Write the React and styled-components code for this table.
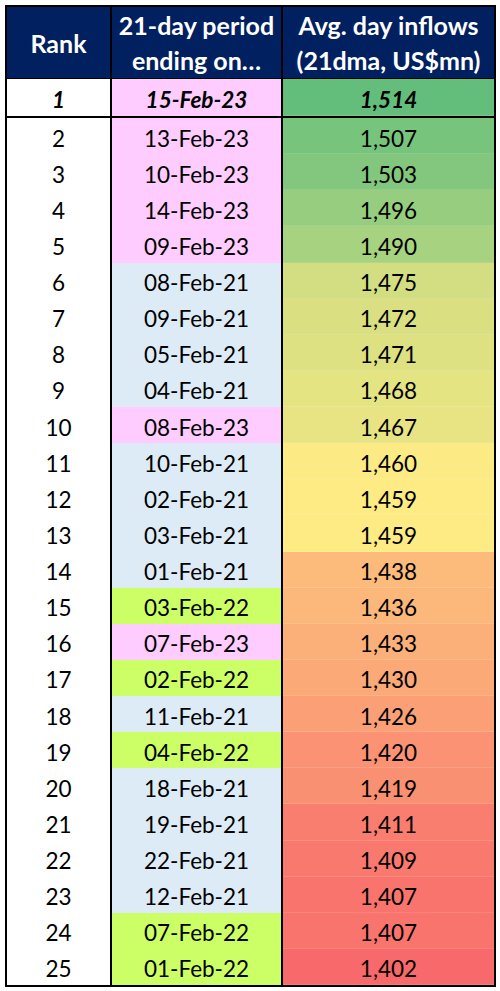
import React from "react";
import styled, { createGlobalStyle, css } from "styled-components";

const GlobalStyle = createGlobalStyle`
  html, body { margin: 0; padding: 0; background: #ffffff; }
  body { font-family: Lato, "Open Sans", sans-serif; }
`;

const rows = [
  [1, "15-Feb-23", 1514],
  [2, "13-Feb-23", 1507],
  [3, "10-Feb-23", 1503],
  [4, "14-Feb-23", 1496],
  [5, "09-Feb-23", 1490],
  [6, "08-Feb-21", 1475],
  [7, "09-Feb-21", 1472],
  [8, "05-Feb-21", 1471],
  [9, "04-Feb-21", 1468],
  [10, "08-Feb-23", 1467],
  [11, "10-Feb-21", 1460],
  [12, "02-Feb-21", 1459],
  [13, "03-Feb-21", 1459],
  [14, "01-Feb-21", 1438],
  [15, "03-Feb-22", 1436],
  [16, "07-Feb-23", 1433],
  [17, "02-Feb-22", 1430],
  [18, "11-Feb-21", 1426],
  [19, "04-Feb-22", 1420],
  [20, "18-Feb-21", 1419],
  [21, "19-Feb-21", 1411],
  [22, "22-Feb-21", 1409],
  [23, "12-Feb-21", 1407],
  [24, "07-Feb-22", 1407],
  [25, "01-Feb-22", 1402],
];

const yearFill = { "21": "#ddebf7", "22": "#ccff66", "23": "#ffccff" };

const RED = [248, 105, 107];
const YELLOW = [255, 235, 132];
const GREEN = [99, 190, 123];
const MIN = 1402;
const MID = 1459;
const MAX = 1514;

function mix(a, b, t) {
  return a.map((v, i) => Math.round(v + (b[i] - v) * t));
}
function scaleColor(v) {
  const c =
    v >= MID
      ? mix(YELLOW, GREEN, (v - MID) / (MAX - MID))
      : mix(RED, YELLOW, (v - MIN) / (MID - MIN));
  return `rgb(${c[0]}, ${c[1]}, ${c[2]})`;
}

const fmt = (n) => n.toLocaleString("en-US");

const Table = styled.div`
  margin: 5px;
  width: 487px;
  border: 2px solid #000;
  background: #000;
`;

const Grid = styled.div`
  display: grid;
  grid-template-columns: 103px 169px 211px;
  column-gap: 2px;
  background: #000;
  height: ${(p) => p.$h}px;
  ${(p) =>
    p.$ruled &&
    css`
      border-bottom: 2px solid #000;
    `}
`;

const HeadCell = styled.div`
  background: #002060;
  color: #ffffff;
  font-weight: 700;
  font-size: 25px;
  line-height: 35px;
  display: flex;
  align-items: center;
  justify-content: center;
  text-align: center;
  padding-top: 1px;
`;

const Cell = styled.div`
  background: ${(p) => p.$bg || "#ffffff"};
  color: #000;
  font-size: 22.5px;
  display: flex;
  align-items: center;
  justify-content: center;
  padding-top: 4px;
  ${(p) =>
    p.$top &&
    css`
      font-weight: 700;
      font-style: italic;
    `}
`;

const ValueCell = styled(Cell)`
  box-shadow: inset 0 -1px 0 rgba(255, 255, 255, 0.12);
`;

export default function App() {
  const [first, ...rest] = rows;
  return (
    <>
      <GlobalStyle />
      <Table>
        <Grid $h={70} $ruled>
          <HeadCell>Rank</HeadCell>
          <HeadCell>
            21-day period
            <br />
            ending on…
          </HeadCell>
          <HeadCell>
            Avg. day inflows
            <br />
            (21dma, US$mn)
          </HeadCell>
        </Grid>
        <Grid $h={37} $ruled>
          <Cell $top>{first[0]}</Cell>
          <Cell $top $bg={yearFill[first[1].slice(-2)]}>
            {first[1]}
          </Cell>
          <ValueCell $top $bg={scaleColor(first[2])}>
            {fmt(first[2])}
          </ValueCell>
        </Grid>
        {rest.map(([rank, date, val]) => (
          <Grid key={rank} $h={36.125}>
            <Cell>{rank}</Cell>
            <Cell $bg={yearFill[date.slice(-2)]}>{date}</Cell>
            <ValueCell $bg={scaleColor(val)}>{fmt(val)}</ValueCell>
          </Grid>
        ))}
      </Table>
    </>
  );
}
